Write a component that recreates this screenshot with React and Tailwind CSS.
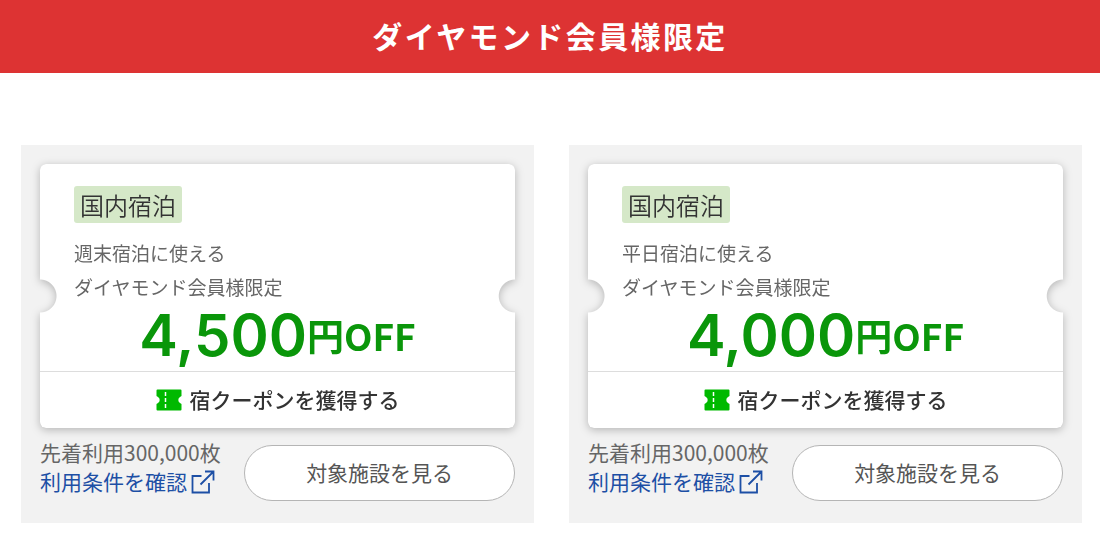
import React from "react";

const COUPONS = [
  { area: '国内宿泊', target: '週末宿泊に使える', rank: 'ダイヤモンド会員様限定', price: '4,500', stock: '300,000' },
  { area: '国内宿泊', target: '平日宿泊に使える', rank: 'ダイヤモンド会員様限定', price: '4,000', stock: '300,000' },
];

const TicketIcon = () => (
  <svg width="26" height="22" viewBox="0 0 26 22" aria-hidden="true">
    <path
      fill="#00b900"
      d="M1.500 .5h23a1 1 0 0 1 1 1v5.500l-1.500 1a3.500 3.500 0 0 0 0 6l1.500 1v5.500a1 1 0 0 1-1 1h-23a1 1 0 0 1-1-1V15l1.500-1a3.500 3.500 0 0 0 0-6L.5 7V1.500a1 1 0 0 1 1-1z"
    />
    <path stroke="#fff" strokeWidth="1.500" strokeDasharray="4 2" d="M9.500 3v16" />
  </svg>
);

const ExternalIcon = () => (
  <svg width="24" height="24" viewBox="0 0 24 24" fill="none" stroke="#1d4fa5" strokeWidth="1.800" aria-hidden="true">
    <path d="M10.500 6H1.500v16.500H18V13" />
    <path d="M14 1.500h8.500v9M22.500 1.500L9.500 14.500" />
  </svg>
);

const CouponCard = ({ coupon }) => (
  <section className="bg-[#f2f2f2] px-[19px] pt-[19px] pb-[22px]">
    {/* the shadow sits on the wrapper so that it follows the notches */}
    <div className="drop-shadow-[0_2px_4px_rgba(0,0,0,0.25)]">
      <div className="rounded-md bg-white [mask:radial-gradient(circle_at_0_132px,transparent_16px,#000_17px)_left/51%_100%_no-repeat,radial-gradient(circle_at_100%_132px,transparent_16px,#000_17px)_right/51%_100%_no-repeat]">
        <div className="px-[34px] pt-[22px]">
          <span className="inline-block rounded-[3px] bg-[#d5e8c8] px-[6px] align-top text-[24px] leading-[37px] font-[350] text-[#333]">
            {coupon.area}
          </span>
          <p className="mt-[13px] text-[19px] leading-[34px] text-[#666]">
            {coupon.target}
            <br />
            {coupon.rank}
          </p>
          <p className="flex items-center justify-center pb-[5px] leading-[62px] text-[#0a960a]">
            <span className="font-[Inter] text-[58px] font-semibold">{coupon.price}</span>
            <span className="text-[37px] font-bold">円OFF</span>
          </p>
        </div>
        <button
          type="button"
          className="flex h-[57px] w-full items-center justify-center gap-2 border-t border-[#ddd] text-[21px] font-medium text-[#333]"
        >
          <TicketIcon />
          宿クーポンを獲得する
        </button>
      </div>
    </div>
    <div className="flex items-start justify-between">
      <div className="mt-[10px] text-[21px] leading-[29px] whitespace-nowrap">
        <p className="text-[#666]">先着利用{coupon.stock}枚</p>
        <a href="#terms" className="flex items-center gap-1 text-[#1d4fa5]">
          利用条件を確認
          <ExternalIcon />
        </a>
      </div>
      <button
        type="button"
        className="mt-[17px] h-[56px] w-[57%] rounded-full border border-[#b5b5b5] bg-white text-[21px] text-[#555]"
      >
        対象施設を見る
      </button>
    </div>
  </section>
);

const App = () => {
  return (
    <main className="bg-white font-['Noto_Sans_CJK_JP',sans-serif]">
      <h1 className="bg-[#dd3333] pb-[3px] text-center text-[30px] leading-[70px] font-bold tracking-[0.08em] text-white">
        ダイヤモンド会員様限定
      </h1>
      <div className="grid grid-cols-2 gap-[35px] pt-[72px] pr-[18px] pb-[18px] pl-[21px]">
        {COUPONS.map((coupon) => (
          <CouponCard key={coupon.target} coupon={coupon} />
        ))}
      </div>
    </main>
  );
};

export default App;
